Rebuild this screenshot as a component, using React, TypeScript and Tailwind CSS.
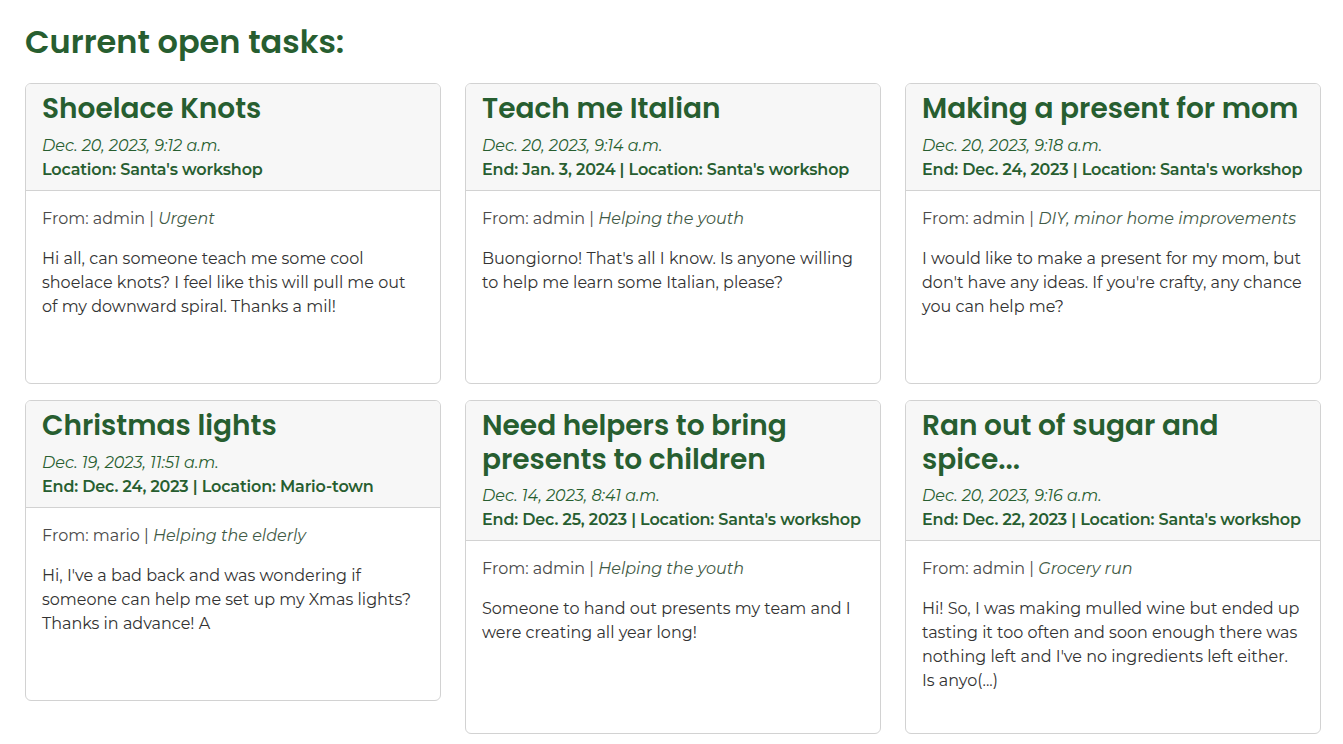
import React from "react";

type Task = {
  title: string;
  date: string;
  end?: string;
  location: string;
  from: string;
  category: string;
  body: string;
};

const tasks: Task[] = [
  {
    title: "Shoelace Knots",
    date: "Dec. 20, 2023, 9:12 a.m.",
    location: "Santa's workshop",
    from: "admin",
    category: "Urgent",
    body: "Hi all, can someone teach me some cool shoelace knots? I feel like this will pull me out of my downward spiral. Thanks a mil!",
  },
  {
    title: "Teach me Italian",
    date: "Dec. 20, 2023, 9:14 a.m.",
    end: "Jan. 3, 2024",
    location: "Santa's workshop",
    from: "admin",
    category: "Helping the youth",
    body: "Buongiorno! That's all I know. Is anyone willing to help me learn some Italian, please?",
  },
  {
    title: "Making a present for mom",
    date: "Dec. 20, 2023, 9:18 a.m.",
    end: "Dec. 24, 2023",
    location: "Santa's workshop",
    from: "admin",
    category: "DIY, minor home improvements",
    body: "I would like to make a present for my mom, but don't have any ideas. If you're crafty, any chance you can help me?",
  },
  {
    title: "Christmas lights",
    date: "Dec. 19, 2023, 11:51 a.m.",
    end: "Dec. 24, 2023",
    location: "Mario-town",
    from: "mario",
    category: "Helping the elderly",
    body: "Hi, I've a bad back and was wondering if someone can help me set up my Xmas lights? Thanks in advance! A",
  },
  {
    title: "Need helpers to bring presents to children",
    date: "Dec. 14, 2023, 8:41 a.m.",
    end: "Dec. 25, 2023",
    location: "Santa's workshop",
    from: "admin",
    category: "Helping the youth",
    body: "Someone to hand out presents my team and I were creating all year long!",
  },
  {
    title: "Ran out of sugar and spice...",
    date: "Dec. 20, 2023, 9:16 a.m.",
    end: "Dec. 22, 2023",
    location: "Santa's workshop",
    from: "admin",
    category: "Grocery run",
    body: "Hi! So, I was making mulled wine but ended up tasting it too often and soon enough there was nothing left and I've no ingredients left either. Is anyo(...)",
  },
];

function Card({ t }: { t: Task }) {
  return (
    <div className="w-[416px] rounded-[6px] border border-[#d2d2d2] bg-white overflow-hidden">
      <div className="bg-[#f7f7f7] border-b border-[#d2d2d2] px-4 pt-2 pb-2">
        <h2 className="font-['Poppins','Open_Sans',sans-serif] font-semibold text-[28px] leading-[1.2] text-[#275e30] mb-2">
          {t.title}
        </h2>
        <div className="text-[16px] leading-6 italic text-[#275e30]">{t.date}</div>
        <div className="text-[16px] leading-6 font-semibold tracking-[-0.16px] whitespace-nowrap text-[#275e30]">
          {t.end ? `End: ${t.end} | ` : ""}Location: {t.location}
        </div>
      </div>
      <div className="h-[192px] px-4 pt-4">
        <div className="text-[16px] leading-6 text-[#4a4a4a] mb-4">
          From: {t.from} | <span className="italic text-[#3f5a45]">{t.category}</span>
        </div>
        <p className="text-[16px] leading-6 text-[#333333]">{t.body}</p>
      </div>
    </div>
  );
}

export default function App() {
  return (
    <div className="min-h-screen bg-white pl-[25px] pt-[23px] font-['Montserrat','Inter',sans-serif]">
      <h1 className="font-['Poppins','Open_Sans',sans-serif] font-semibold text-[32px] leading-[1.2] text-[#275e30] mb-[22px]">
        Current open tasks:
      </h1>
      <div className="grid grid-cols-[416px_416px_416px] gap-x-6 gap-y-4 items-start">
        {tasks.map((t) => (
          <Card key={t.title} t={t} />
        ))}
      </div>
    </div>
  );
}
